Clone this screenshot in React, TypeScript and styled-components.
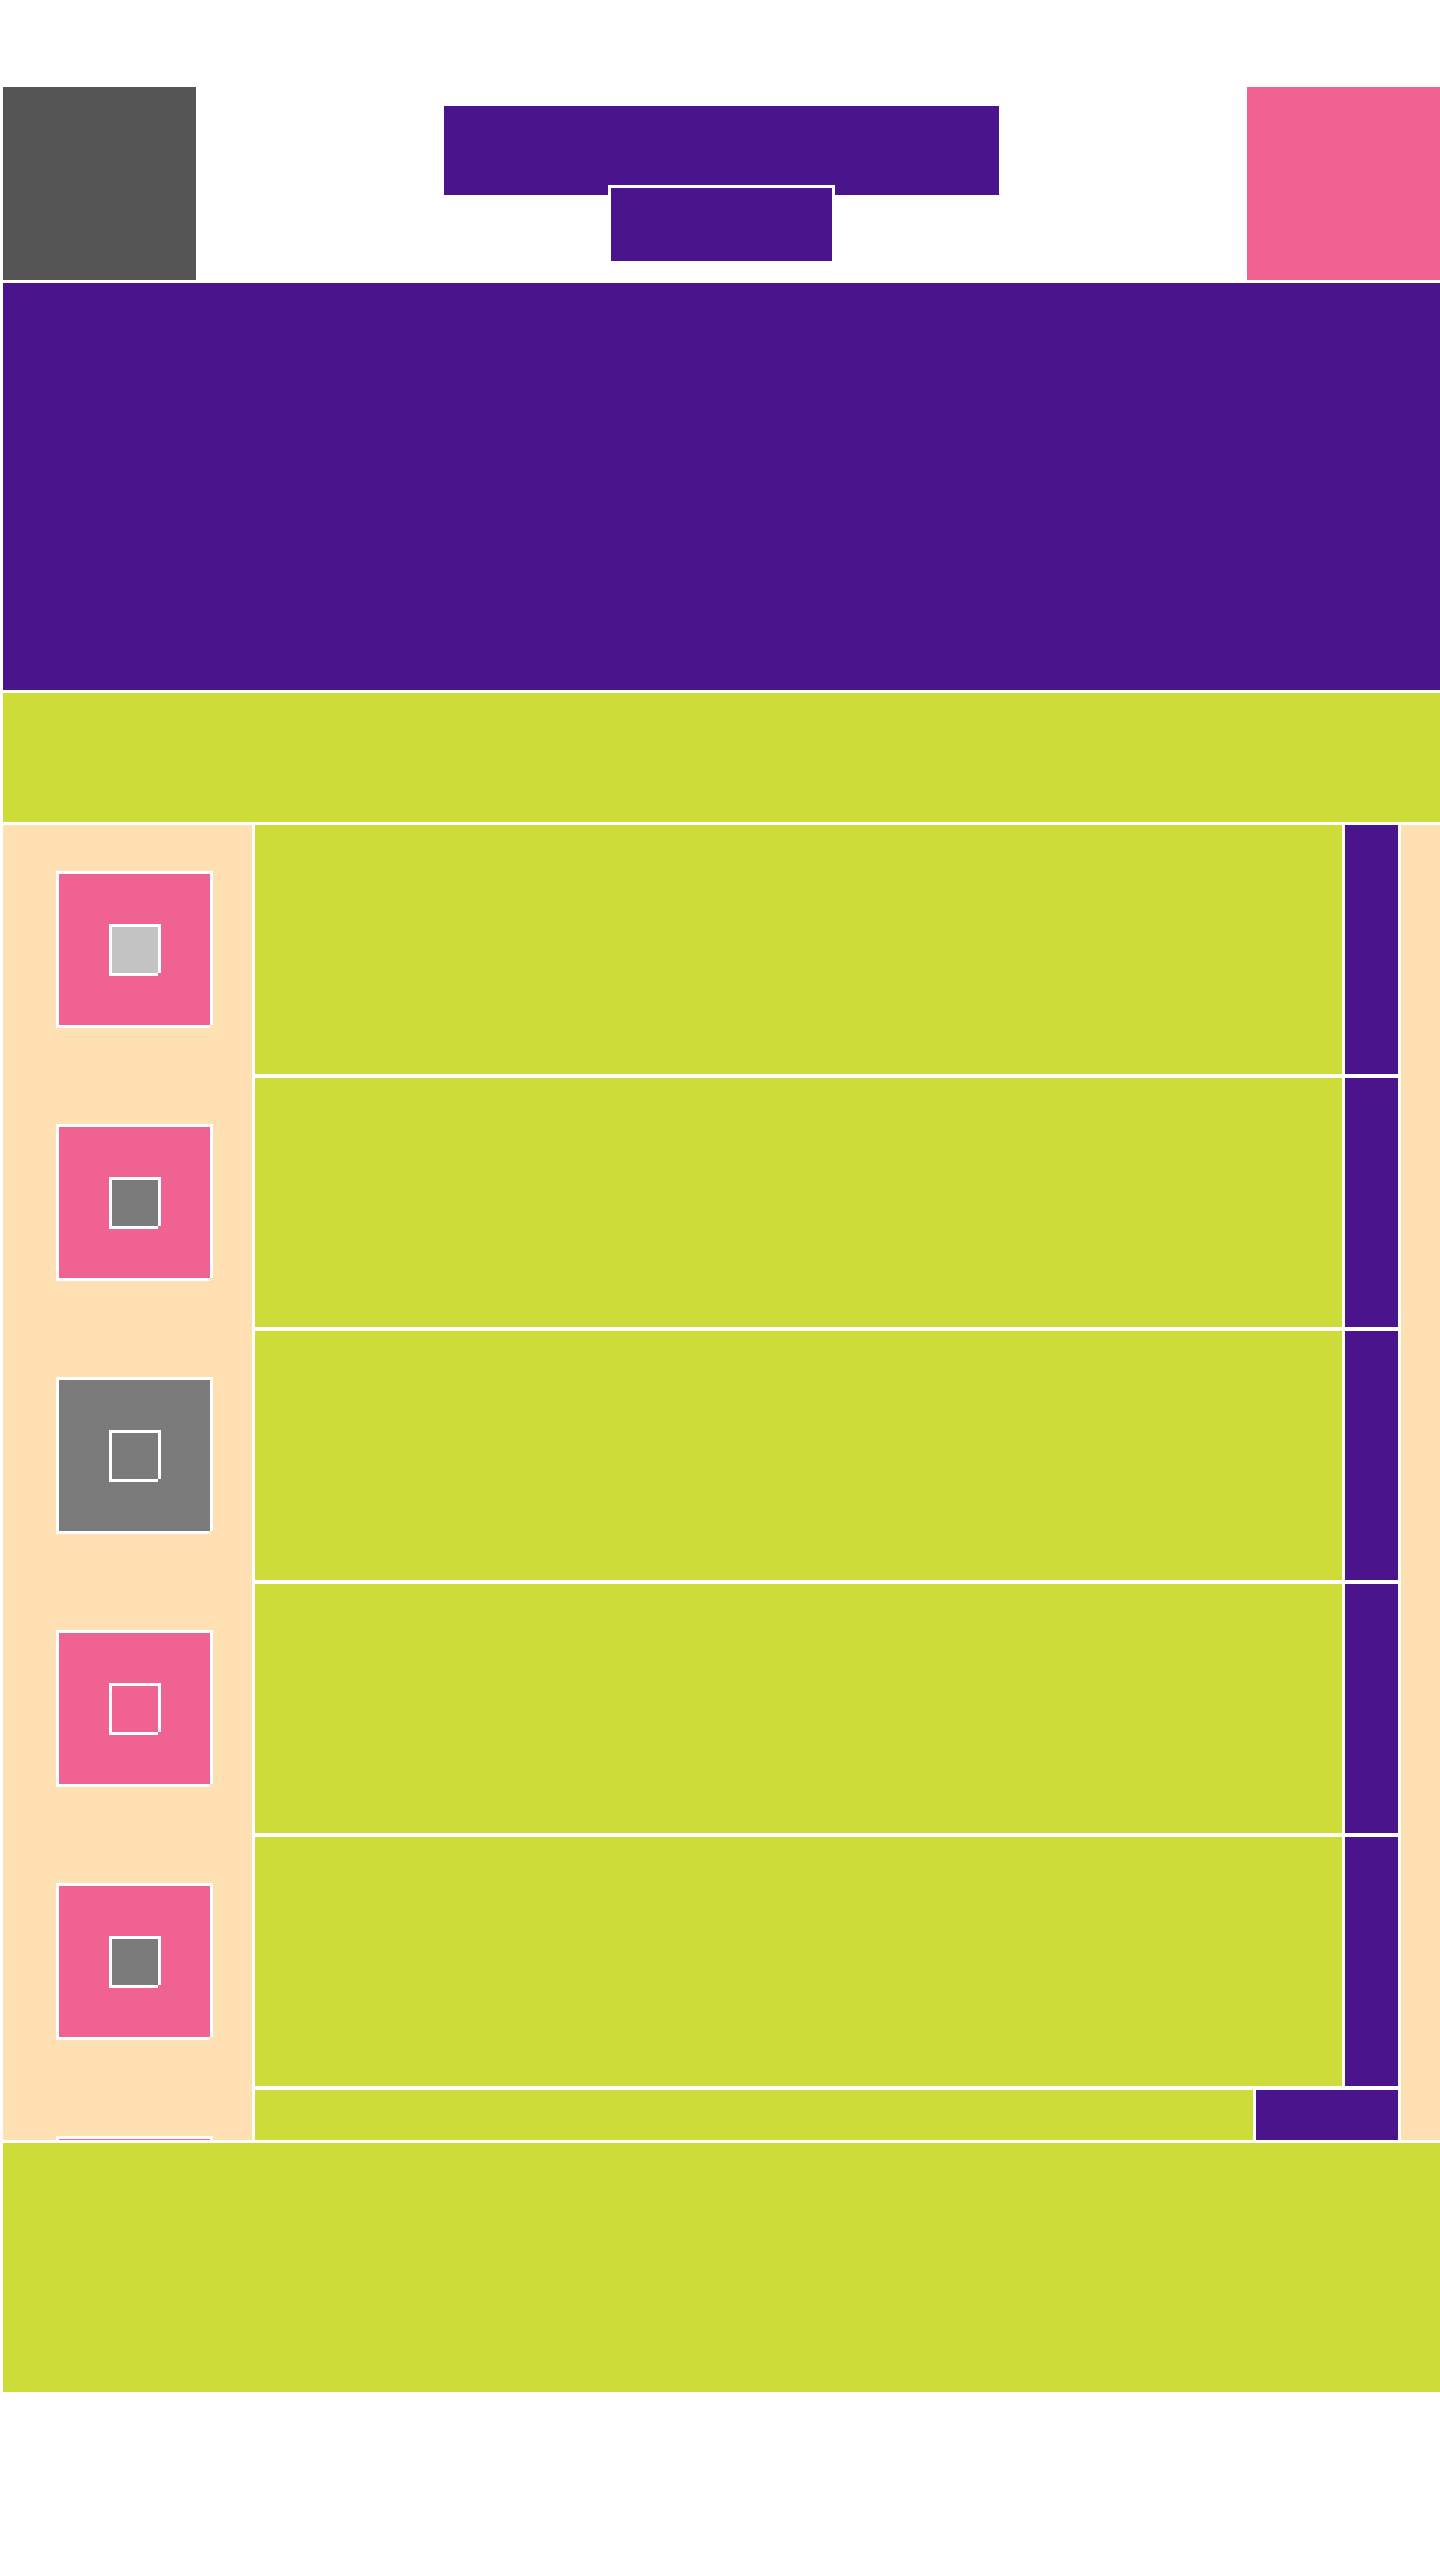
import React from "react";
import styled, { createGlobalStyle } from "styled-components";

const PURPLE = "#4a148c";
const LIME = "#cddc39";
const PINK = "#f06292";
const PEACH = "#ffe0b2";
const DARK = "#555555";
const MID = "#7b7b7b";
const LIGHT = "#c4c4c4";

const frame =
  "-3px -3px 0 0 #fff, 3px -3px 0 0 #fff, -3px 3px 0 0 #fff, 3px 0 0 0 #fff, 0 3px 0 0 #fff";

const Global = createGlobalStyle`
  html, body { margin: 0; padding: 0; background: #fff; }
  body { font-family: "Liberation Sans", Arial, sans-serif; }
`;

const Page = styled.div`
  box-sizing: border-box;
  width: 1440px;
  padding: 87px 0 0 3px;
  display: flex;
  flex-direction: column;
  gap: 3px;
  overflow: hidden;
`;

const Header = styled.header`
  height: 193px;
  display: flex;
  align-items: flex-start;
`;

const Tile = styled.div<{ $color: string }>`
  width: 193px;
  height: 193px;
  flex-shrink: 0;
  background: ${(p) => p.$color};
`;

const Brand = styled.div`
  flex: 1;
  box-sizing: border-box;
  padding-top: 19px;
  display: flex;
  flex-direction: column;
  align-items: center;
`;

const TitleBar = styled.div`
  width: 555px;
  height: 89px;
  background: ${PURPLE};
`;

const SubButton = styled.div`
  width: 221px;
  height: 73px;
  margin-top: -7px;
  background: ${PURPLE};
  box-shadow: ${frame};
`;

const Hero = styled.section`
  height: 407px;
  background: ${PURPLE};
`;

const Band = styled.section<{ $h: number }>`
  height: ${(p) => p.$h}px;
  background: ${LIME};
`;

const Main = styled.section`
  height: 1315px;
  display: grid;
  grid-template-columns: 249px 1fr 39px;
  column-gap: 3px;
  overflow: hidden;
`;

const SideList = styled.div`
  background: ${PEACH};
  box-sizing: border-box;
  padding: 49px 0 0 56px;
  display: flex;
  flex-direction: column;
  gap: 102px;
  overflow: hidden;
`;

const Card = styled.div<{ $color: string }>`
  width: 151px;
  height: 151px;
  flex-shrink: 0;
  background: ${(p) => p.$color};
  box-shadow: ${frame};
  display: flex;
  align-items: center;
  justify-content: center;
`;

const Glyph = styled.div<{ $color: string }>`
  width: 46px;
  height: 46px;
  background: ${(p) => p.$color};
  box-shadow: ${frame};
`;

const Rows = styled.div`
  display: flex;
  flex-direction: column;
  gap: 4px;
`;

const Row = styled.div`
  height: 249px;
  flex-shrink: 0;
  display: flex;
  gap: 3px;
`;

const RowBody = styled.div`
  flex: 1;
  background: ${LIME};
`;

const RowAction = styled.div<{ $w: number }>`
  width: ${(p) => p.$w}px;
  flex-shrink: 0;
  background: ${PURPLE};
`;

const Rail = styled.div`
  background: ${PEACH};
`;

const cards = [
  { bg: PINK, fg: LIGHT },
  { bg: PINK, fg: MID },
  { bg: MID, fg: MID },
  { bg: PINK, fg: PINK },
  { bg: PINK, fg: MID },
  { bg: PINK, fg: MID },
];

const rowWidths = [53, 53, 53, 53, 53, 142];

export default function App() {
  return (
    <>
      <Global />
      <Page>
        <Header>
          <Tile $color={DARK} />
          <Brand>
            <TitleBar />
            <SubButton />
          </Brand>
          <Tile $color={PINK} />
        </Header>
        <Hero />
        <Band $h={129} />
        <Main>
          <SideList>
            {cards.map((c, i) => (
              <Card key={i} $color={c.bg}>
                <Glyph $color={c.fg} />
              </Card>
            ))}
          </SideList>
          <Rows>
            {rowWidths.map((w, i) => (
              <Row key={i}>
                <RowBody />
                <RowAction $w={w} />
              </Row>
            ))}
          </Rows>
          <Rail />
        </Main>
        <Band $h={249} />
      </Page>
    </>
  );
}
